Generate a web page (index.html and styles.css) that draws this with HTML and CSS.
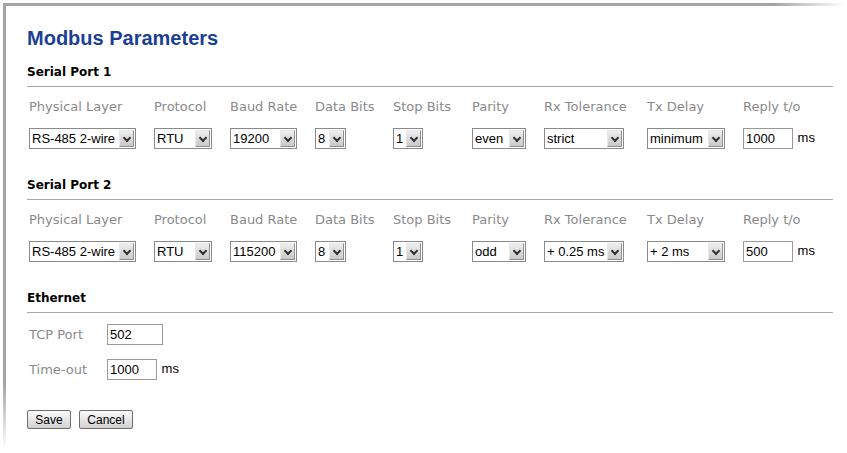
FILE: index.html
```html
<!DOCTYPE html>
<html lang="en">
<head>
    <meta charset="UTF-8">
    <title>Modbus Parameters</title>
    <link rel="stylesheet" href="styles.css">
</head>
<body>
    <div class="frame">
        <h1>Modbus Parameters</h1>

        <!-- Serial Port 1 -->
        <h2>Serial Port 1</h2>
        <div class="port">
            <span class="lbl">Physical Layer</span>
            <span class="lbl">Protocol</span>
            <span class="lbl">Baud Rate</span>
            <span class="lbl">Data Bits</span>
            <span class="lbl">Stop Bits</span>
            <span class="lbl">Parity</span>
            <span class="lbl">Rx Tolerance</span>
            <span class="lbl">Tx Delay</span>
            <span class="lbl">Reply t/o</span>

            <span class="dd w-phys"><select><option>RS-485 2-wire</option></select><i></i></span>
            <span class="dd w-proto"><select><option>RTU</option></select><i></i></span>
            <span class="dd w-baud"><select><option>19200</option></select><i></i></span>
            <span class="dd w-bits"><select><option>8</option></select><i></i></span>
            <span class="dd w-stop"><select><option>1</option></select><i></i></span>
            <span class="dd w-parity"><select><option>even</option></select><i></i></span>
            <span class="dd w-rx"><select><option>strict</option></select><i></i></span>
            <span class="dd w-tx"><select><option>minimum</option></select><i></i></span>
            <span class="field"><input type="text" class="w-reply" value="1000"> ms</span>
        </div>

        <!-- Serial Port 2 -->
        <h2>Serial Port 2</h2>
        <div class="port">
            <span class="lbl">Physical Layer</span>
            <span class="lbl">Protocol</span>
            <span class="lbl">Baud Rate</span>
            <span class="lbl">Data Bits</span>
            <span class="lbl">Stop Bits</span>
            <span class="lbl">Parity</span>
            <span class="lbl">Rx Tolerance</span>
            <span class="lbl">Tx Delay</span>
            <span class="lbl">Reply t/o</span>

            <span class="dd w-phys"><select><option>RS-485 2-wire</option></select><i></i></span>
            <span class="dd w-proto"><select><option>RTU</option></select><i></i></span>
            <span class="dd w-baud"><select><option>115200</option></select><i></i></span>
            <span class="dd w-bits"><select><option>8</option></select><i></i></span>
            <span class="dd w-stop"><select><option>1</option></select><i></i></span>
            <span class="dd w-parity"><select><option>odd</option></select><i></i></span>
            <span class="dd w-rx"><select><option>+ 0.25 ms</option></select><i></i></span>
            <span class="dd w-tx"><select><option>+ 2 ms</option></select><i></i></span>
            <span class="field"><input type="text" class="w-reply" value="500"> ms</span>
        </div>

        <!-- Ethernet -->
        <h2>Ethernet</h2>
        <div class="eth">
            <div class="eth-row">
                <span class="lbl eth-lbl">TCP Port</span>
                <input type="text" class="w-port" value="502">
            </div>
            <div class="eth-row">
                <span class="lbl eth-lbl">Time-out</span>
                <span class="field"><input type="text" class="w-timeout" value="1000"> ms</span>
            </div>
        </div>

        <div class="buttons">
            <button type="button" class="btn w-save">Save</button>
            <button type="button" class="btn w-cancel">Cancel</button>
        </div>
    </div>
</body>
</html>
```

FILE: styles.css
```css
body {
    margin: 0;
    background-color: #fff;
    background-image:
        linear-gradient(to right, #a4a4a4 0, #a4a4a4 770px, rgba(255, 255, 255, 0) 842px),
        linear-gradient(to bottom, #a4a4a4 0, #a4a4a4 380px, rgba(255, 255, 255, 0) 446px);
    background-size: 842px 3px, 3px 446px;
    background-position: 3px 3px, 3px 3px;
    background-repeat: no-repeat;
    font-family: "Liberation Sans", Arial, sans-serif;
    font-size: 13px;
    color: #000;
}
.frame {
    margin: 6px 0 0 6px;
    padding: 20px 14px 0 21px;
}
h1 {
    margin: 0;
    font-size: 20px;
    line-height: 24px;
    font-weight: bold;
    color: #1b3f95;
}
h2 {
    margin: 14px 0 0 0;
    padding-bottom: 6px;
    border-bottom: 1px solid #aaa;
    font-family: "DejaVu Sans", Verdana, sans-serif;
    font-size: 12px;
    line-height: 16px;
    font-weight: bold;
}
.port + h2 {
    margin-top: 28px;
}
.eth + .buttons {
    margin-top: 30px;
}
.port {
    display: grid;
    grid-template-columns: 125px 76px 85px 78px 79px 72px 103px 96px auto;
    row-gap: 13px;
    padding: 12px 0 0 2px;
    align-items: center;
}
.lbl {
    font-family: "DejaVu Sans", Verdana, sans-serif;
    font-size: 13px;
    line-height: 16px;
    color: #8a8a8a;
}
.dd {
    position: relative;
    display: inline-block;
    height: 21px;
    justify-self: start;
}
.dd select {
    appearance: none;
    -webkit-appearance: none;
    box-sizing: border-box;
    width: 100%;
    height: 21px;
    margin: 0;
    padding: 0 0 0 2px;
    border: 1px solid #8a8a8a;
    border-radius: 0;
    background: #fff;
    font-family: "Liberation Sans", Arial, sans-serif;
    font-size: 13px;
    color: #000;
}
/* drop-down button drawn over the select */
.dd i {
    position: absolute;
    top: 2px;
    right: 2px;
    width: 15px;
    height: 17px;
    box-sizing: border-box;
    border: 1px solid #a9a9a9;
    border-color: #e8e8e8 #8f8f8f #8f8f8f #e8e8e8;
    background: linear-gradient(#eeeeee, #c9c9c9);
    pointer-events: none;
}
.dd i::after {
    content: "";
    position: absolute;
    left: 4px;
    top: 4px;
    width: 4px;
    height: 4px;
    border-right: 2px solid #333;
    border-bottom: 2px solid #333;
    transform: rotate(45deg);
}
.w-phys { width: 107px; }
.w-proto { width: 58px; }
.w-baud { width: 67px; }
.w-bits { width: 31px; }
.w-stop { width: 30px; }
.w-parity { width: 54px; }
.w-rx { width: 80px; }
.w-tx { width: 78px; }
.w-reply { width: 50px; }
.w-port { width: 56px; }
.w-timeout { width: 50px; }
.field {
    white-space: nowrap;
}
input[type="text"] {
    box-sizing: border-box;
    height: 21px;
    margin: 0 1px 0 0;
    padding: 0 2px;
    border: 1px solid #999;
    font-family: "Liberation Sans", Arial, sans-serif;
    font-size: 13px;
    color: #000;
    vertical-align: middle;
}
.eth {
    padding: 11px 0 0 2px;
}
.eth-row {
    display: flex;
    align-items: center;
    margin-bottom: 14px;
}
.eth-row:last-child {
    margin-bottom: 0;
}
.eth-lbl {
    width: 78px;
}
.buttons {
    display: flex;
    gap: 8px;
}
.btn {
    box-sizing: border-box;
    height: 19px;
    padding: 0;
    border: 1px solid #6e6e6e;
    border-radius: 2px;
    background: linear-gradient(#fbfbfb, #e6e6e6 50%, #d2d2d2);
    font-family: "Liberation Sans", Arial, sans-serif;
    font-size: 12px;
    color: #000;
}
.w-save { width: 44px; }
.w-cancel { width: 54px; }
```
